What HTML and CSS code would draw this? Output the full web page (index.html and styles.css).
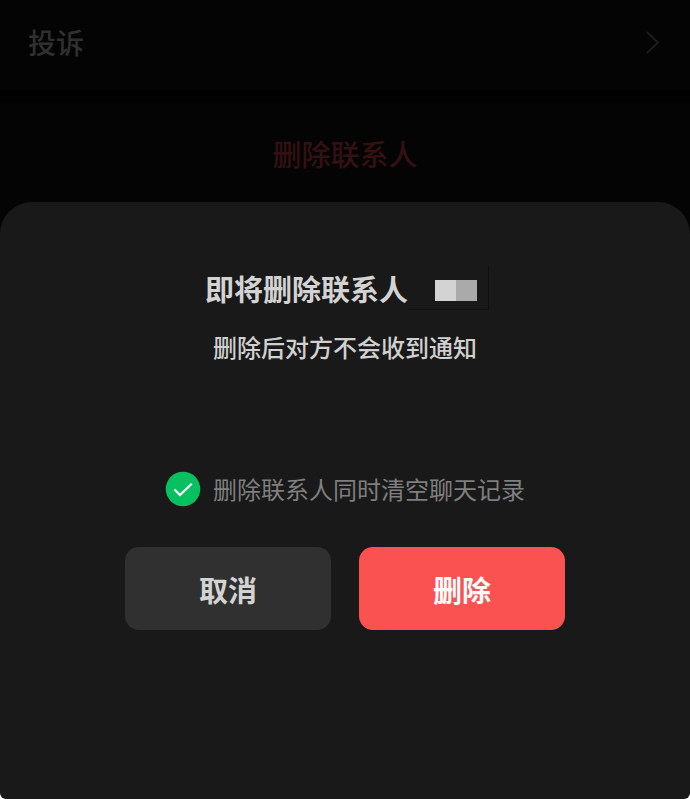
FILE: index.html
```html
<!DOCTYPE html>
<html lang="zh-CN">
<head>
    <meta charset="UTF-8">
    <meta name="viewport" content="width=device-width, initial-scale=1.0">
    <title>删除联系人</title>
    <link rel="stylesheet" href="styles.css">
</head>
<body>
    <div class="page">
        <a class="row" href="#">
            <span>投诉</span>
            <svg class="chevron" width="14" height="24" viewBox="0 0 14 24">
                <path d="M1 2 L12 12.5 L1 23" fill="none" stroke="currentColor" stroke-width="2"/>
            </svg>
        </a>
        <button class="delete-contact">删除联系人</button>
    </div>

    <div class="sheet">
        <h2 class="title">即将删除联系人<span class="name"><span class="name-mask"></span></span></h2>
        <p class="hint">删除后对方不会收到通知</p>
        <label class="option">
            <input type="checkbox" class="option-input" checked>
            <svg class="option-check" width="36" height="36" viewBox="0 0 36 36">
                <circle cx="18" cy="18" r="17.3" fill="#07c160"/>
                <path d="M9.5 18.5 L15 24 L26.8 12.8" fill="none" stroke="#fff" stroke-width="2.2"/>
            </svg>
            <span>删除联系人同时清空聊天记录</span>
        </label>
        <div class="actions">
            <button class="btn">取消</button>
            <button class="btn btn-danger">删除</button>
        </div>
    </div>
</body>
</html>
```
FILE: styles.css
```css
* {
    box-sizing: border-box;
}
body {
    margin: 0;
    min-height: 100vh;
    display: flex;
    flex-direction: column;
    background-color: #fff;
    font-family: "Noto Sans CJK SC", sans-serif;
}
button {
    border: none;
    font-family: inherit;
    cursor: pointer;
}
/* runs on under the rounded top of the sheet */
.page {
    margin-bottom: -32px;
    padding-bottom: 32px;
    background-color: #040404;
}
.row {
    display: flex;
    align-items: center;
    justify-content: space-between;
    height: 103px;
    padding: 0 30px 6px 28px;
    border-bottom: 13px solid #010101;
    color: #303030;
    font-size: 28px;
    font-weight: 500;
    text-decoration: none;
}
.chevron {
    color: #1c1c1c;
}
.delete-contact {
    display: block;
    width: 100%;
    height: 99px;
    padding: 0;
    background-color: #040404;
    color: #351012;
    font-size: 29px;
    font-weight: 500;
}
.sheet {
    position: relative;
    flex: 1;
    display: flex;
    flex-direction: column;
    align-items: center;
    padding: 64px 28px;
    border-radius: 32px 32px 6px 6px;
    background-color: #191919;
}
.title {
    display: flex;
    align-items: center;
    margin: 0;
    padding-left: 4px;
    color: #d3d3d3;
    font-size: 29px;
    line-height: 44px;
    font-weight: 700;
}
.name {
    display: flex;
    align-items: center;
    justify-content: flex-end;
    width: 81px;
    height: 44px;
    padding: 6px 11px 0 0;
    border-right: 1px solid #101010;
    border-bottom: 1px solid #101010;
}
.name-mask {
    width: 42px;
    height: 21px;
    background: linear-gradient(to right, #d3d3d3 50%, #aaaaaa 50%);
}
.hint {
    margin: 19px 0 0;
    color: #d0d0d0;
    font-size: 24px;
    line-height: 36px;
    font-weight: 500;
}
.option {
    display: flex;
    align-items: center;
    gap: 12px;
    margin-top: 106px;
    color: #7f7f7f;
    font-size: 24px;
    line-height: 36px;
    cursor: pointer;
}
.option-input {
    position: absolute;
    opacity: 0;
}
.actions {
    display: flex;
    gap: 28px;
    margin-top: 40px;
}
.btn {
    width: 206px;
    height: 83px;
    padding: 0;
    border-radius: 14px;
    background-color: #303030;
    color: #d3d3d3;
    font-size: 29px;
    font-weight: 700;
}
.btn-danger {
    background-color: #fa5151;
    color: #fff;
}
```
